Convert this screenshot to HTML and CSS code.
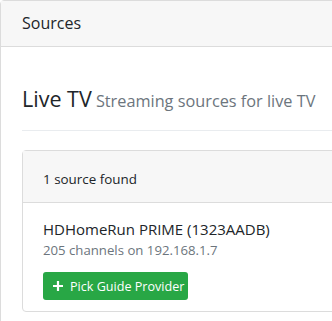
FILE: index.html
```html
<!DOCTYPE html>
<html lang="en">
<head>
    <meta charset="UTF-8">
    <title>Sources</title>
    <link rel="stylesheet" href="styles.css">
</head>
<body>
<div class="card">
    <div class="card-header">Sources</div>
    <div class="card-body">
        <div class="page-title">
            <span class="title">Live TV</span>
            <small class="subtitle">Streaming sources for live TV</small>
        </div>
        <div class="source-list">
            <div class="list-header">1 source found</div>
            <div class="source">
                <div class="source-name">HDHomeRun PRIME (1323AADB)</div>
                <div class="source-info">205 channels on 192.168.1.7</div>
                <button class="btn-green">
                    <svg class="plus" width="10" height="10" viewBox="0 0 10 10"><path d="M5 0v10M0 5h10" stroke="#fff" stroke-width="2.2"/></svg>
                    Pick Guide Provider
                </button>
            </div>
        </div>
    </div>
</div>
</body>
</html>
```

FILE: styles.css
```css
body {
    margin: 0;
    font-family: "Open Sans", "Noto Sans", sans-serif;
    color: #212529;
    background-color: white;
    overflow: hidden;
    height: 321px;
}

.card {
    width: 380px;
    border: 1px solid #dcdcdc;
    border-radius: 4px;
    height: 330px;
}

.card-header {
    background-color: #f7f7f7;
    border-bottom: 1px solid #dcdcdc;
    padding: 0 21px;
    height: 45px;
    line-height: 45px;
    font-size: 16px;
}

.card-body {
    padding: 0 21px;
}

.page-title {
    margin-top: 35px;
    padding-bottom: 12px;
    border-bottom: 1px solid #e9ecef;
    line-height: 34px;
    white-space: nowrap;
}

.title {
    font-size: 21.5px;
}

.subtitle {
    font-size: 16.3px;
    color: #6c757d;
}

.source-list {
    margin-top: 19px;
    border: 1px solid #dcdcdc;
    border-radius: 4px;
    height: 160px;
}

.list-header {
    background-color: #f7f7f7;
    border-bottom: 1px solid #dcdcdc;
    padding: 0 20px;
    height: 51px;
    line-height: 56px;
    font-size: 13.4px;
}

.source {
    padding: 14px 20px 12px;
}

.source-name {
    font-size: 15px;
    line-height: 24px;
}

.source-info {
    font-size: 13.2px;
    color: #6c757d;
    line-height: 18px;
}

.btn-green {
    margin-top: 13px;
    display: flex;
    align-items: center;
    gap: 7px;
    height: 28px;
    width: 145px;
    padding: 0 10px;
    font-family: inherit;
    font-size: 12.6px;
    white-space: nowrap;
    color: white;
    background-color: #28a745;
    border: none;
    border-radius: 3px;
}

.plus {
    flex-shrink: 0;
}
```
